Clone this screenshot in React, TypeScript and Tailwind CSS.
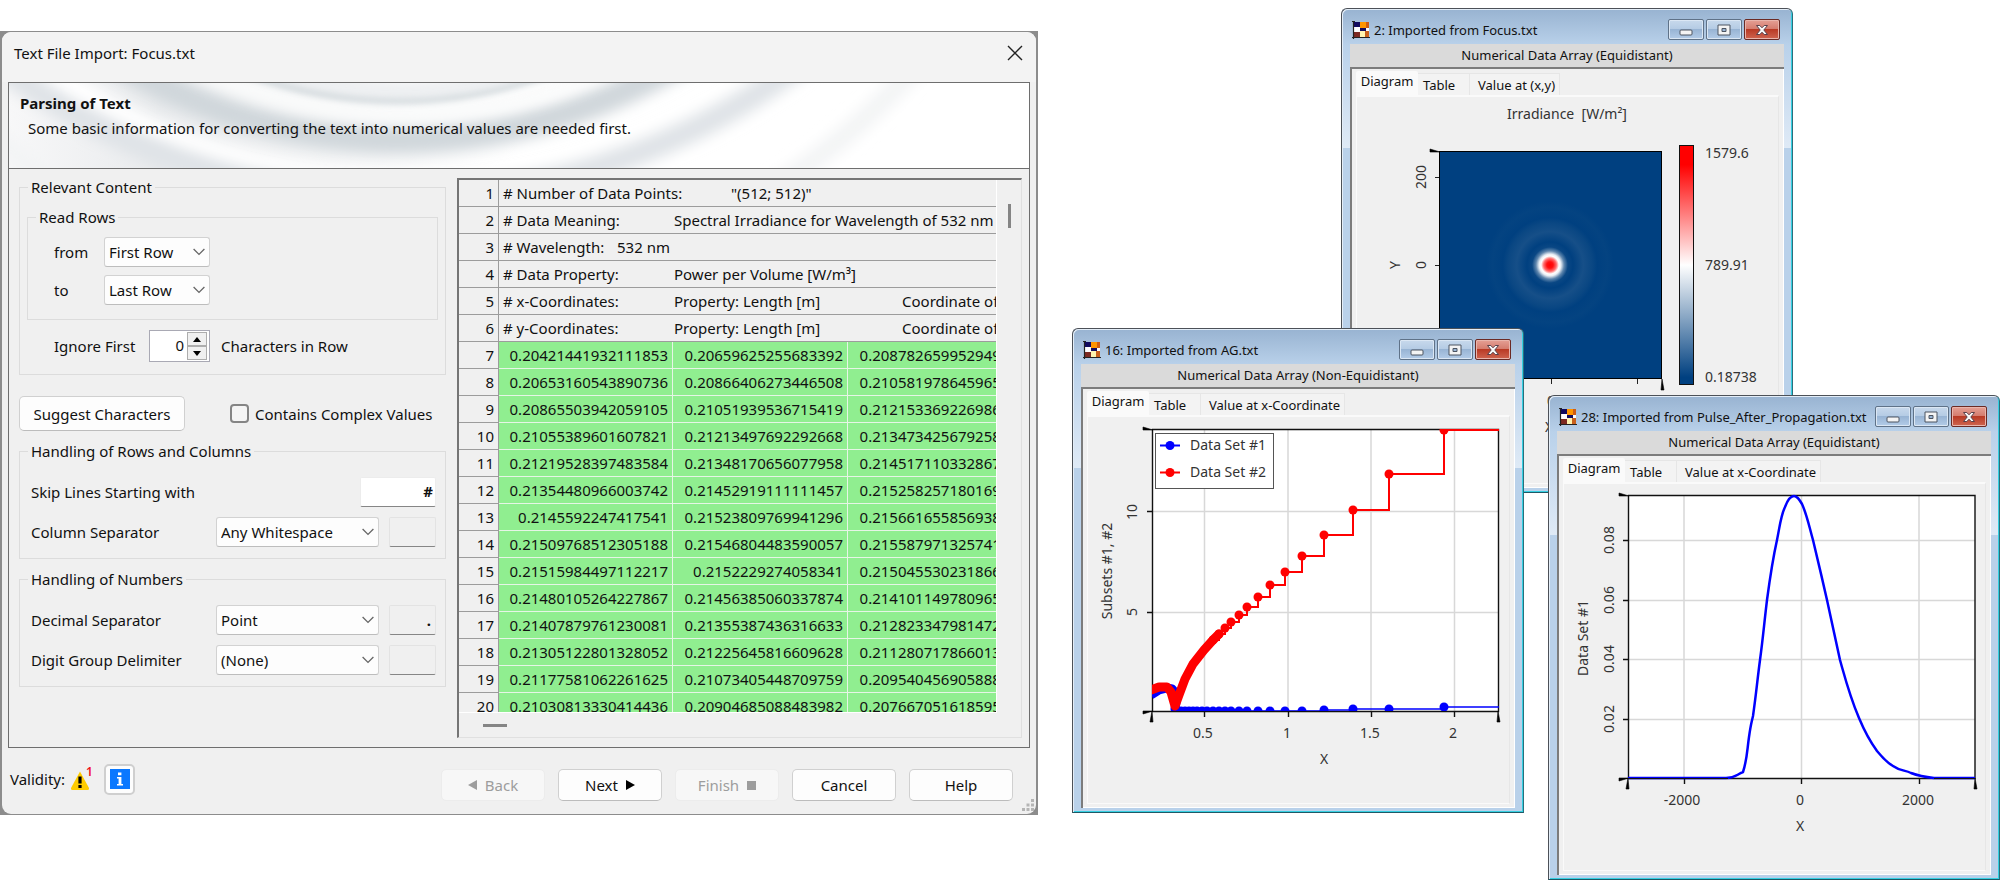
import type { ReactNode } from "react";

const textRows = [
  '# Number of Data Points:\t"(512; 512)"',
  "# Data Meaning:\tSpectral Irradiance for Wavelength of 532 nm",
  "# Wavelength:\t532 nm",
  "# Data Property:\tPower per Volume [W/m³]",
  "# x-Coordinates:\tProperty: Length [m]\t\tCoordinate of",
  "# y-Coordinates:\tProperty: Length [m]\t\tCoordinate of",
];

const valueRows = [
  ["0.20421441932111853", "0.20659625255683392", "0.20878265995294912"],
  ["0.20653160543890736", "0.20866406273446508", "0.21058197864596514"],
  ["0.20865503942059105", "0.21051939536715419", "0.21215336922698613"],
  ["0.21055389601607821", "0.21213497692292668", "0.21347342567925816"],
  ["0.21219528397483584", "0.21348170656077958", "0.21451711033286712"],
  ["0.21354480966003742", "0.21452919111111457", "0.21525825718016914"],
  ["0.2145592247417541", "0.21523809769941296", "0.21566165585693817"],
  ["0.21509768512305188", "0.21546804483590057", "0.21558797132574113"],
  ["0.21515984497112217", "0.2152229274058341", "0.21504553023186615"],
  ["0.21480105264227867", "0.21456385060337874", "0.21410114978096518"],
  ["0.21407879761230081", "0.21355387436316633", "0.21282334798147212"],
  ["0.21305122801328052", "0.21225645816609628", "0.21128071786601314"],
  ["0.21177581062261625", "0.21073405448709759", "0.20954045690588816"],
  ["0.21030813330414436", "0.20904685088483982", "0.20766705161859513"],
];

function Select({
  id,
  value,
  className,
}: {
  id: string;
  value: string;
  className: string;
}) {
  return (
    <div className={`relative ${className}`}>
      <select
        id={id}
        className="h-[30px] w-full appearance-none rounded-[3px] border border-[#d2d2d2] border-b-[#bdbdbd] bg-[#fdfdfd] pl-1 text-[15px]"
      >
        <option>{value}</option>
      </select>
      <svg
        viewBox="0 0 12 8"
        className="pointer-events-none absolute top-[11px] right-[5px] h-2 w-3"
        fill="none"
        stroke="#666"
        strokeWidth="1.3"
      >
        <path d="M0.6 1l5.4 5.4L11.4 1" />
      </svg>
    </div>
  );
}

function Group({ title, children }: { title: string; children: ReactNode }) {
  return (
    <fieldset className="border border-[#dcdcdc]">
      <legend className="ml-2 px-[3px] leading-5">{title}</legend>
      {children}
    </fieldset>
  );
}

function CharBox({ label, value }: { label: string; value?: string }) {
  return (
    <input
      aria-label={label}
      defaultValue={value}
      readOnly
      className="h-[30px] w-[47px] rounded-[2px] border border-[#e3e3e3] border-b-[#868686] bg-[#f0f0f0] pr-1 text-right font-bold"
    />
  );
}

function WizardButton({
  children,
  disabled,
}: {
  children: ReactNode;
  disabled?: boolean;
}) {
  return (
    <button
      disabled={disabled}
      className="flex h-8 w-[104px] items-center justify-center gap-2 rounded-[5px] border border-[#d0d0d0] border-b-[#bcbcbc] bg-[#fdfdfd] disabled:border-[#ececec] disabled:bg-[#f7f7f7] disabled:text-[#9d9d9d]"
    >
      {children}
    </button>
  );
}

function Swirl() {
  return (
    <svg
      viewBox="9 84 1020 84"
      preserveAspectRatio="xMidYMid slice"
      className="absolute inset-0 h-full w-full"
      fill="none"
    >
      <defs>
        <filter id="soft" x="-10%" y="-10%" width="120%" height="120%">
          <feGaussianBlur stdDeviation="7" />
        </filter>
        <filter id="fine" x="-10%" y="-10%" width="120%" height="120%">
          <feGaussianBlur stdDeviation="3" />
        </filter>
        <linearGradient id="wash" x1="0" x2="1" y1="0" y2="0">
          <stop offset="0" stopColor="#f8f8f9" />
          <stop offset="0.15" stopColor="#e9ebed" />
          <stop offset="0.3" stopColor="#f2f3f4" />
          <stop offset="0.5" stopColor="#ffffff" />
        </linearGradient>
      </defs>
      <rect x="9" y="84" width="1020" height="84" fill="url(#wash)" />
      <circle cx="400" cy="-430" r="612" stroke="#ffffff" strokeWidth="26" filter="url(#soft)" />
      <circle cx="400" cy="-466" r="663" stroke="#dfe3e7" strokeWidth="24" filter="url(#soft)" />
      <circle cx="420" cy="-367" r="656" stroke="#f3f4f5" strokeWidth="20" filter="url(#soft)" />
      <circle cx="400" cy="-400" r="540" stroke="#d0d7db" strokeWidth="28" filter="url(#soft)" />
      <circle cx="400" cy="-375" r="488" stroke="#fafbfb" strokeWidth="20" filter="url(#soft)" />
      <circle cx="400" cy="-331" r="424" stroke="#eef0f2" strokeWidth="16" filter="url(#fine)" />
      <circle cx="400" cy="-331" r="433" stroke="#ced5d9" strokeWidth="5" filter="url(#fine)" />
    </svg>
  );
}

function ImportDialog() {
  return (
    <section className="mt-[31px] w-[51.9%] shrink-0 bg-[#8c8c8c] px-[2px] py-px">
      <div className="rounded-[9px] bg-[#f0f0f0]">
        <header className="flex h-[50px] items-center justify-between rounded-t-[9px] bg-[#f3f3f3] pr-[13px] pb-[9px] pl-3">
          <h1>Text File Import: Focus.txt</h1>
          <button aria-label="Close">
            <svg viewBox="0 0 16 16" className="size-4" stroke="#222" strokeWidth="1.4">
              <path d="M1 1l14 14M15 1L1 15" />
            </svg>
          </button>
        </header>

        <div className="mx-[6px] border border-[#6e6e6e]">
          <div className="relative h-[86px] overflow-hidden border-b border-[#6e6e6e]">
            <Swirl />
            <div className="relative pt-[10px] pl-[11px] leading-5">
              <h2 className="font-bold">Parsing of Text</h2>
              <p className="mt-[5px] pl-2">
                Some basic information for converting the text into numerical
                values are needed first.
              </p>
            </div>
          </div>

          <div className="flex gap-[11px] pt-2 pr-[7px] pb-[9px] pl-[10px]">
            {/* settings */}
            <div className="flex w-[427px] shrink-0 flex-col">
              <Group title="Relevant Content">
                <div className="px-[7px] pt-[10px]">
                  <Group title="Read Rows">
                    <div className="flex flex-col gap-2 px-[26px] pt-[10px] pb-[14px]">
                      <div className="flex items-center">
                        <label htmlFor="from" className="w-[50px]">from</label>
                        <Select id="from" value="First Row" className="w-[106px]" />
                      </div>
                      <div className="flex items-center">
                        <label htmlFor="to" className="w-[50px]">to</label>
                        <Select id="to" value="Last Row" className="w-[106px]" />
                      </div>
                    </div>
                  </Group>
                </div>
                <div className="flex items-center pt-[10px] pb-3 pl-[34px]">
                  <label htmlFor="ignore" className="w-[95px]">Ignore First</label>
                  <div className="flex h-8 w-[61px] border border-[#a9a9b4] bg-white py-px pr-[2px]">
                    <input
                      id="ignore"
                      defaultValue="0"
                      className="min-w-0 flex-1 pr-[3px] pb-[2px] text-right"
                    />
                    <div className="flex flex-col">
                      <button
                        aria-label="Increase"
                        className="flex h-[14px] w-5 items-center justify-center border border-[#adadad] bg-[#f0f0f0]"
                      >
                        <svg viewBox="0 0 8 5" className="h-[5px] w-2"><path d="M0 5l4-5 4 5z" /></svg>
                      </button>
                      <button
                        aria-label="Decrease"
                        className="flex h-[14px] w-5 items-center justify-center border border-[#adadad] bg-[#f0f0f0]"
                      >
                        <svg viewBox="0 0 8 5" className="h-[5px] w-2"><path d="M0 0l4 5 4-5z" /></svg>
                      </button>
                    </div>
                  </div>
                  <span className="ml-[11px]">Characters in Row</span>
                </div>
              </Group>

              <div className="mt-[21px] mb-[10px] flex items-center justify-between">
                <button className="h-[35px] w-[166px] rounded-[5px] border border-[#d0d0d0] border-b-[#bcbcbc] bg-[#fdfdfd]">
                  Suggest Characters
                </button>
                <label className="flex w-[216px] items-center gap-[6px] whitespace-nowrap">
                  <input
                    type="checkbox"
                    className="size-[19px] appearance-none rounded-[4px] border-2 border-[#858585] bg-[#f5f5f5]"
                  />
                  Contains Complex Values
                </label>
              </div>

              <Group title="Handling of Rows and Columns">
                <div className="flex flex-col gap-[10px] pt-4 pr-[9px] pb-[11px] pl-[11px]">
                  <div className="flex items-center justify-between">
                    <label htmlFor="skip">Skip Lines Starting with</label>
                    <input
                      id="skip"
                      defaultValue="#"
                      className="h-[30px] w-[76px] rounded-[2px] border border-[#ececec] border-b-[#868686] bg-white pr-[2px] pb-[2px] text-right font-bold"
                    />
                  </div>
                  <div className="flex items-center">
                    <label htmlFor="column" className="flex-1">Column Separator</label>
                    <Select id="column" value="Any Whitespace" className="mr-[10px] w-[163px]" />
                    <CharBox label="Column separator character" />
                  </div>
                </div>
              </Group>

              <div className="mt-[10px]">
                <Group title="Handling of Numbers">
                  <div className="flex flex-col gap-[10px] pt-4 pr-[9px] pb-[11px] pl-[11px]">
                    <div className="flex items-center">
                      <label htmlFor="decimal" className="flex-1">Decimal Separator</label>
                      <Select id="decimal" value="Point" className="mr-[10px] w-[163px]" />
                      <CharBox label="Decimal separator character" value="." />
                    </div>
                    <div className="flex items-center">
                      <label htmlFor="digits" className="flex-1">Digit Group Delimiter</label>
                      <Select id="digits" value="(None)" className="mr-[10px] w-[163px]" />
                      <CharBox label="Digit group character" />
                    </div>
                  </div>
                </Group>
              </div>
            </div>

            {/* preview */}
            <div className="mt-px flex h-[560px] min-w-0 flex-1 flex-col border-t-2 border-r border-b border-l-2 border-t-[#757575] border-r-[#e0e0e0] border-b-[#e0e0e0] border-l-[#757575]">
              <div className="flex h-[533px]">
                <div className="min-w-0 flex-1 overflow-hidden border-r border-b border-white">
                  <table className="w-[564px] table-fixed border-separate border-spacing-0">
                    <colgroup>
                      <col className="w-10" />
                      <col className="w-[174px]" />
                      <col className="w-[175px]" />
                      <col className="w-[175px]" />
                    </colgroup>
                    <tbody>
                      {textRows.map((row, i) => (
                        <tr key={row} className="h-[27px]">
                          <th className="border-r border-b border-[#9c9c9c] pr-1 text-right font-normal">{i + 1}</th>
                          <td
                            colSpan={3}
                            className="border-b border-[#9c9c9c] pl-1 whitespace-pre [tab-size:57px]"
                          >
                            {row}
                          </td>
                        </tr>
                      ))}
                      {valueRows.map((row, i) => (
                        <tr key={row[0]} className="h-[27px]">
                          <th className="border-r border-b border-[#9c9c9c] pr-1 text-right font-normal">{i + 7}</th>
                          {row.map((value) => (
                            <td
                              key={value}
                              className="overflow-hidden border-r border-b border-[#e6f5e6] bg-[#90ee90] pr-1 text-right"
                            >
                              {value}
                            </td>
                          ))}
                        </tr>
                      ))}
                    </tbody>
                  </table>
                </div>
                <div className="w-6 pt-6 pl-[11px]">
                  <div className="h-6 w-[3px] bg-[#858585]" />
                </div>
              </div>
              <div className="pt-[11px] pl-6">
                <div className="h-[3px] w-6 bg-[#858585]" />
              </div>
            </div>
          </div>
        </div>

        <footer className="relative flex h-[66px] items-center justify-between pr-[23px] pl-2">
          <div className="flex items-center pb-1">
            <span>Validity:</span>
            <svg viewBox="0 0 24 28" className="ml-[5px] h-7 w-6">
              <path d="M10 6.500L1 23q-.6 2 1.400 2h15.200q2 0 1.400-2z" fill="#ffcc00" />
              <path d="M8.400 11.500h3.200v7H8.400zM8.400 20h3.200v3H8.400z" />
              <text x="16" y="11" fontSize="12" fontWeight="600" fill="#f0141e">1</text>
            </svg>
            <button
              aria-label="Information"
              className="ml-[10px] flex size-[31px] items-center justify-center rounded-[5px] border-2 border-[#cfcfcf] bg-[#fdfdfd]"
            >
              <svg viewBox="0 0 20 20" className="size-5">
                <rect width="20" height="20" fill="#0a78ff" />
                <path d="M8 3.500h3.400v2.800H8zM7 8h4.400v7H13v1.600H7V15h1.600V9.600H7z" fill="#fff" />
              </svg>
            </button>
          </div>
          <div className="flex gap-[13px] pt-2">
            <WizardButton disabled>
              <svg viewBox="0 0 9 10" className="h-[10px] w-[9px]" fill="#9d9d9d"><path d="M9 0v10L0 5z" /></svg>
              Back
            </WizardButton>
            <WizardButton>
              Next
              <svg viewBox="0 0 9 10" className="h-[10px] w-[9px]"><path d="M0 0v10l9-5z" /></svg>
            </WizardButton>
            <WizardButton disabled>
              Finish
              <svg viewBox="0 0 9 9" className="size-[9px]" fill="#9d9d9d"><path d="M0 0h9v9H0z" /></svg>
            </WizardButton>
            <WizardButton>Cancel</WizardButton>
            <WizardButton>Help</WizardButton>
          </div>
          <svg viewBox="0 0 12 12" className="absolute right-[2px] bottom-[3px] size-3" fill="#b5b5b5">
            <path d="M9 0h3v3H9zM9 4.500h3v3H9zM4.500 4.500h3v3h-3zM0 9h3v3H0zM4.500 9h3v3h-3zM9 9h3v3H9z" />
          </svg>
        </footer>
      </div>
    </section>
  );
}

function AppIcon() {
  return (
    <svg viewBox="0 0 18 18" className="size-[18px] shrink-0">
      <rect x="1" y="1" width="16" height="16" fill="#fff" />
      <path d="M2 1h6v5H2z" fill="#120a5e" />
      <path d="M8 1h6v6H8z" fill="#ff9500" />
      <path d="M14 1h3v6h-3z" fill="#cf5c14" />
      <path d="M8 7h6v3H8z" fill="#120a5e" />
      <path d="M14 7h3v3h-3z" fill="#ffffff" />
      <path d="M2 11h6v5H2z" fill="#7d2a22" />
      <path d="M8 10h5v6H8z" fill="#fff3b0" />
      <path d="M13 10h4v6h-4z" fill="#c9601d" />
      <path d="M1.500 0v18M0 16.500h18M0 .5h3" stroke="#222" strokeWidth="1.200" />
    </svg>
  );
}

function ChartWindow({
  title,
  subtitle,
  valueTab,
  className,
  children,
}: {
  title: string;
  subtitle: string;
  valueTab: string;
  className: string;
  children: ReactNode;
}) {
  return (
    <section
      className={`absolute flex h-[485px] w-[452px] flex-col rounded-t-[6px] border border-[#4c5158] border-r-[#2a6f7c] border-b-[#1d5966] bg-[linear-gradient(#98b3d1,#b9d1ea_36px,#dfeaf6_139px,#b9d1ea_139px)] px-2 pb-2 shadow-[inset_1px_1px_0_#e4eef8,inset_-1px_-1px_0_#35cfe2] ${className}`}
    >
      <header className="flex h-[35px] shrink-0 items-center pt-[6px] pr-1 pl-[2px]">
        <AppIcon />
        <h2 className="ml-1 min-w-0 flex-1 text-[13px] leading-5 whitespace-nowrap">{title}</h2>
        <div className="flex gap-[2px]">
          <button
            aria-label="Minimize"
            className="flex h-[21px] w-9 items-center justify-center rounded-[2px] border border-[#5f7288] bg-[linear-gradient(#c8d9ec,#b4cbe4_48%,#98b4d4_50%,#b3cce8)] shadow-[inset_0_0_0_1px_#dbe7f4]"
          >
            <svg viewBox="0 0 14 14" className="size-[14px]">
              <rect x="1" y="7" width="12" height="5" rx="1" fill="#f4f4f4" stroke="#4d5460" />
            </svg>
          </button>
          <button
            aria-label="Maximize"
            className="flex h-[21px] w-9 items-center justify-center rounded-[2px] border border-[#5f7288] bg-[linear-gradient(#c8d9ec,#b4cbe4_48%,#98b4d4_50%,#b3cce8)] shadow-[inset_0_0_0_1px_#dbe7f4]"
          >
            <svg viewBox="0 0 14 14" className="size-[14px]">
              <path
                d="M1 2h12v10H1zM5 5.500v3h4v-3z"
                fill="#f4f4f4"
                fillRule="evenodd"
                stroke="#4d5460"
              />
            </svg>
          </button>
          <button
            aria-label="Close"
            className="flex h-[21px] w-9 items-center justify-center rounded-[2px] border border-[#6b2a24] bg-[linear-gradient(#e5a095,#d47b6d_48%,#b93a25_50%,#cf6550)] shadow-[inset_0_0_0_1px_#e9b5ac]"
          >
            <svg viewBox="0 0 14 14" className="size-[14px]">
              <path
                d="M1.500 2.500h3.300L7 4.800l2.200-2.300h3.300L8.800 7l3.700 4.500H9.200L7 9.200l-2.200 2.300H1.500L5.200 7z"
                fill="#f8f8f8"
                stroke="#59404a"
              />
            </svg>
          </button>
        </div>
      </header>
      <p className="h-[23px] shrink-0 bg-[#dadada] text-center text-[13px] leading-[22px]">{subtitle}</p>
      <div className="flex flex-1 flex-col border-t-2 border-l-2 border-[#7c7c7c] bg-[#f0f0f0] shadow-[inset_-1px_-1px_0_#ffffff]">
        <nav className="flex items-end pt-[2px] pl-1 text-[13px] leading-5">
          <button className="h-6 w-[62px] rounded-t-[2px] bg-[#fafafa] pb-1">Diagram</button>
          <button className="h-[22px] w-[52px] border-t border-r border-[#e6e6e6] bg-[#f3f3f3] pl-[5px] text-left">
            Table
          </button>
          <button className="h-[22px] border-t border-r border-[#e6e6e6] bg-[#f3f3f3] pr-1 pl-2">
            {valueTab}
          </button>
        </nav>
        <div className="mr-[5px] mb-[4px] ml-1 flex-1 border border-t-2 border-[#fafafa] border-r-[#e6e6e6]">
          {children}
        </div>
      </div>
    </section>
  );
}

// chart coordinates count from the window's upper left corner
function Chart({ label, children }: { label: string; children: ReactNode }) {
  return (
    <svg
      viewBox="16 89 421 386"
      width="421"
      height="386"
      role="img"
      aria-label={label}
      fontSize="14"
      fill="#333"
      className="block"
    >
      {children}
    </svg>
  );
}

function VerticalText({ x, y, children }: { x: number; y: number; children: string }) {
  return (
    <text x={x} y={y} transform={`rotate(-90 ${x} ${y})`} textAnchor="middle">
      {children}
    </text>
  );
}

// wedge marks at the ends of both axes
function Corners({ x1, x2, y1, y2 }: { x1: number; x2: number; y1: number; y2: number }) {
  return (
    <path
      d={`M${x1 + 1} ${y1}l-10-3v3zM${x1 + 1} ${y2}l-10 3v-3zM${x1} ${y2}l-2 11h3zM${x2} ${y2}l2 11h-3z`}
      fill="#000"
      stroke="#000"
      strokeWidth="0.600"
    />
  );
}

function FocusChart() {
  return (
    <Chart label="Irradiance over X and Y">
      <defs>
        <linearGradient id="scale" x1="0" x2="0" y1="0" y2="1">
          <stop offset="0" stopColor="#ff0000" />
          <stop offset="0.08" stopColor="#ff0000" />
          <stop offset="0.5" stopColor="#ffffff" />
          <stop offset="0.97" stopColor="#004080" />
        </linearGradient>
        <radialGradient id="spot" gradientUnits="userSpaceOnUse" cx="209" cy="257" r="64">
          <stop offset="0" stopColor="#ff0000" />
          <stop offset="0.05" stopColor="#ff1010" />
          <stop offset="0.1" stopColor="#ff7070" />
          <stop offset="0.14" stopColor="#ffffff" />
          <stop offset="0.17" stopColor="#e9eef4" />
          <stop offset="0.22" stopColor="#5f86ad" />
          <stop offset="0.28" stopColor="#0a4784" />
          <stop offset="0.36" stopColor="#004080" />
          <stop offset="0.52" stopColor="#164f88" />
          <stop offset="0.66" stopColor="#0a4783" />
          <stop offset="0.74" stopColor="#004080" />
          <stop offset="0.9" stopColor="#044381" />
          <stop offset="1" stopColor="#004080" />
        </radialGradient>
      </defs>
      <text x="226" y="111" textAnchor="middle" xmlSpace="preserve" className="whitespace-pre">
        {"Irradiance  [W/m²]"}
      </text>
      <rect x="98.500" y="143.500" width="222" height="227" fill="#004080" stroke="#000" />
      <circle cx="209" cy="257" r="64" fill="url(#spot)" />
      <path d="M94 169.500h4M94 257.500h4M210.500 371v5M296.500 371v5" stroke="#222" />
      <Corners x1={98} x2={321} y1={144} y2={371} />
      <VerticalText x={85} y={169}>200</VerticalText>
      <VerticalText x={85} y={257}>0</VerticalText>
      <VerticalText x={59} y={257}>Y</VerticalText>
      <text x="210" y="398" textAnchor="middle">0</text>
      <text x="296" y="398" textAnchor="middle">200</text>
      <text x="208" y="424" textAnchor="middle">X</text>
      <rect x="338.500" y="137.500" width="14" height="239" fill="url(#scale)" stroke="#111" />
      <text x="364" y="150">1579.6</text>
      <text x="364" y="262">789.91</text>
      <text x="364" y="374">0.18738</text>
    </Chart>
  );
}

const redPoints = [
  [141, 312], [147, 306], [153, 300], [159, 294], [167, 287], [175, 279],
  [186, 269], [198, 257], [213, 244], [230, 228], [252, 207], [281, 182],
  [317, 146], [372, 102],
];

const bluePoints = [
  [105, 383], [109, 383], [113, 383], [117, 383], [121, 383], [125, 383],
  [130, 383], [135, 383], [141, 383], [147, 383], [153, 383], [159, 383],
  [167, 383], [175, 383], [186, 383], [198, 383], [213, 383], [230, 383],
  [252, 382], [281, 381], [317, 381], [372, 379],
];

function stepPath(points: number[][], end: number) {
  const [first, ...rest] = points;
  return `M${first[0]} ${first[1]}${rest.map(([x, y]) => `H${x}V${y}`).join("")}H${end}`;
}

function AgChart() {
  return (
    <Chart label="Subsets #1 and #2 over X">
      <defs>
        <clipPath id="plot">
          <rect x="80" y="101" width="347" height="282" />
        </clipPath>
      </defs>
      <rect x="80" y="101" width="346" height="282" fill="#fff" />
      <path
        d="M132.500 101v282M216 101v282M299 101v282M382.500 101v282M80 183.500h346M80 284.500h346"
        stroke="#d8d8d8"
        strokeWidth="1.500"
      />
      <path
        d="M80.500 101.500H426.500V383.500H80.500zM75 183.500h5M75 284.500h5M132.500 383v6M216.500 383v6M299.500 383v6M382.500 383v6"
        fill="none"
        stroke="#111"
        strokeWidth="1.400"
      />
      <g clipPath="url(#plot)" fill="none">
        <path
          d="M79 367l8-5 8-2 5 1 5 6-2 14h4"
          stroke="#0000ff"
          strokeWidth="9"
          strokeLinejoin="round"
        />
        <path d={stepPath(bluePoints, 427)} stroke="#0000ff" strokeWidth="1.500" />
        {bluePoints.map(([x, y]) => (
          <circle key={x} cx={x} cy={y} r="4.500" fill="#0000ff" />
        ))}
        <path
          d="M79 362l8-3 8 0 4 5 4 14 4-11 6-16 8-15 11-14 9-10 6-6"
          stroke="#ff0000"
          strokeWidth="9"
          strokeLinecap="round"
          strokeLinejoin="round"
        />
        <path d={stepPath(redPoints, 427)} stroke="#ff0000" strokeWidth="2" />
        {redPoints.map(([x, y]) => (
          <circle key={x} cx={x} cy={y} r="4.500" fill="#ff0000" />
        ))}
      </g>
      <Corners x1={80} x2={426} y1={102} y2={383} />
      <rect x="83.500" y="105.500" width="118" height="55" fill="#fff" stroke="#555" />
      <path d="M88 117.500h20" stroke="#0000ff" strokeWidth="2" />
      <circle cx="98" cy="117.500" r="4.500" fill="#0000ff" />
      <path d="M88 144.500h20" stroke="#ff0000" strokeWidth="2" />
      <circle cx="98" cy="144.500" r="4.500" fill="#ff0000" />
      <text x="118" y="122">Data Set #1</text>
      <text x="118" y="149">Data Set #2</text>
      <VerticalText x={65} y={184}>10</VerticalText>
      <VerticalText x={65} y={284}>5</VerticalText>
      <VerticalText x={40} y={243}>Subsets #1, #2</VerticalText>
      <text x="131" y="410" textAnchor="middle">0.5</text>
      <text x="215" y="410" textAnchor="middle">1</text>
      <text x="298" y="410" textAnchor="middle">1.5</text>
      <text x="381" y="410" textAnchor="middle">2</text>
      <text x="252" y="436" textAnchor="middle">X</text>
    </Chart>
  );
}

function PulseChart() {
  return (
    <Chart label="Data Set #1 over X">
      <rect x="80" y="100" width="347" height="283" fill="#fff" />
      <path
        d="M136 100v283M253.500 100v283M371 100v283M80 145.500h347M80 205.500h347M80 264.500h347M80 324.500h347"
        stroke="#d8d8d8"
        strokeWidth="1.500"
      />
      <path
        d="M80.500 100.500H427V383.500H80.500zM75 145.500h5M75 205.500h5M75 264.500h5M75 324.500h5M136.500 383v6M253.500 383v6M371.500 383v6"
        fill="none"
        stroke="#111"
        strokeWidth="1.400"
      />
      <Corners x1={80} x2={427} y1={101} y2={383} />
      <path
        d="M80 383H178C187 383 188 380 195 377C199 365 199 356 201 342C203 328 203 330 205 321C208 300 209 288 212 265C215 243 216 230 219 205C223 175 225 163 229 145C232 130 233 120 237 112C240 104 243 101 246 101C249 101 251 104 254 109C259 120 261 131 265 145C271 170 274 183 279 205C284 228 287 242 292 265C299 290 302 302 311 323C316 335 321 345 329 356C334 362 338 367 345 371C352 376 357 375 363 378C371 381 377 382 386 383H427"
        fill="none"
        stroke="#0000ff"
        strokeWidth="2.500"
      />
      <path d="M80 383.500H180M386 383.500H427" stroke="#111" />
      <VerticalText x={66} y={145}>0.08</VerticalText>
      <VerticalText x={66} y={205}>0.06</VerticalText>
      <VerticalText x={66} y={264}>0.04</VerticalText>
      <VerticalText x={66} y={324}>0.02</VerticalText>
      <VerticalText x={40} y={243}>Data Set #1</VerticalText>
      <text x="134" y="410" textAnchor="middle">-2000</text>
      <text x="252" y="410" textAnchor="middle">0</text>
      <text x="370" y="410" textAnchor="middle">2000</text>
      <text x="252" y="436" textAnchor="middle">X</text>
    </Chart>
  );
}

export default function App() {
  return (
    <main className="flex min-h-screen items-start bg-white font-['Noto_Sans',sans-serif] text-[15px] leading-5 text-[#111]">
      <ImportDialog />
      <div className="relative min-h-screen flex-1">
        <ChartWindow
          title="2: Imported from Focus.txt"
          subtitle="Numerical Data Array (Equidistant)"
          valueTab="Value at (x,y)"
          className="top-2 left-[303px]"
        >
          <FocusChart />
        </ChartWindow>
        <ChartWindow
          title="16: Imported from AG.txt"
          subtitle="Numerical Data Array (Non-Equidistant)"
          valueTab="Value at x-Coordinate"
          className="top-[328px] left-[34px]"
        >
          <AgChart />
        </ChartWindow>
        <ChartWindow
          title="28: Imported from Pulse_After_Propagation.txt"
          subtitle="Numerical Data Array (Equidistant)"
          valueTab="Value at x-Coordinate"
          className="top-[395px] left-[510px]"
        >
          <PulseChart />
        </ChartWindow>
      </div>
    </main>
  );
}
